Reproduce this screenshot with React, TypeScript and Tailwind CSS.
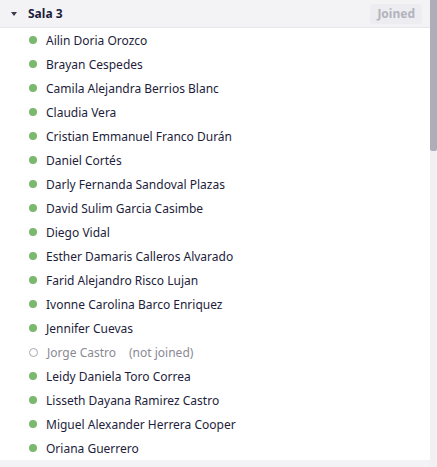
const members: { name: string; joined: boolean }[] = [
  { name: 'Ailin Doria Orozco', joined: true },
  { name: 'Brayan Cespedes', joined: true },
  { name: 'Camila Alejandra Berrios Blanc', joined: true },
  { name: 'Claudia Vera', joined: true },
  { name: 'Cristian Emmanuel Franco Durán', joined: true },
  { name: 'Daniel Cortés', joined: true },
  { name: 'Darly Fernanda Sandoval Plazas', joined: true },
  { name: 'David Sulim Garcia Casimbe', joined: true },
  { name: 'Diego Vidal', joined: true },
  { name: 'Esther Damaris Calleros Alvarado', joined: true },
  { name: 'Farid Alejandro Risco Lujan', joined: true },
  { name: 'Ivonne Carolina Barco Enriquez', joined: true },
  { name: 'Jennifer Cuevas', joined: true },
  { name: 'Jorge Castro', joined: false },
  { name: 'Leidy Daniela Toro Correa', joined: true },
  { name: 'Lisseth Dayana Ramirez Castro', joined: true },
  { name: 'Miguel Alexander Herrera Cooper', joined: true },
  { name: 'Oriana Guerrero', joined: true },
];

const MemberRow = ({ name, joined }: { name: string; joined: boolean }) => {
  return (
    <div className="flex items-center h-6 pl-[29px]">
      {joined ? (
        <div className="w-[8px] h-[8px] rounded-full bg-[#7bb96f]" />
      ) : (
        <div className="w-[9px] h-[9px] rounded-full border-[1.5px] border-[#a8a8ad]" />
      )}
      <div
        className={`ml-[9px] mt-[2px] text-[12px] ${
          joined ? 'text-[#1d1d3b]' : 'text-[#8a8a94]'
        }`}
      >
        {name}
        {!joined && <span className="ml-[13px]">(not joined)</span>}
      </div>
    </div>
  );
};

export default function App() {
  return (
    <div
      className="flex w-[437px] h-[467px] bg-[#f3f3f6] overflow-hidden"
      style={{ fontFamily: '"Noto Sans", "Open Sans", sans-serif' }}
    >
      <div className="flex flex-col w-[430px]">
        <div className="flex items-center h-[28px] border-b border-[#e6e6ea] bg-[#f3f3f6] pl-[11px] pr-[8px]">
          <svg width="6" height="4" viewBox="0 0 6 4" className="mt-[1px]">
            <path d="M0 0 L6 0 L3 4 Z" fill="#3a3a48" />
          </svg>
          <div className="ml-[11px] mt-[1px] text-[12px] font-bold text-[#1d1d3b]">Sala 3</div>
          <div className="ml-auto px-[7px] h-[20px] flex items-center rounded bg-[#ececf1] text-[12px] font-bold text-[#b3b3bb]">
            Joined
          </div>
        </div>
        <div className="bg-white flex flex-col">
          {members.map((m) => (
            <MemberRow key={m.name} name={m.name} joined={m.joined} />
          ))}
        </div>
      </div>
      <div className="w-[7px] flex flex-col bg-[#f1f1f5]">
        <div className="h-[151px] bg-[#aeaeb8] rounded-b-[2px]" />
      </div>
    </div>
  );
}
